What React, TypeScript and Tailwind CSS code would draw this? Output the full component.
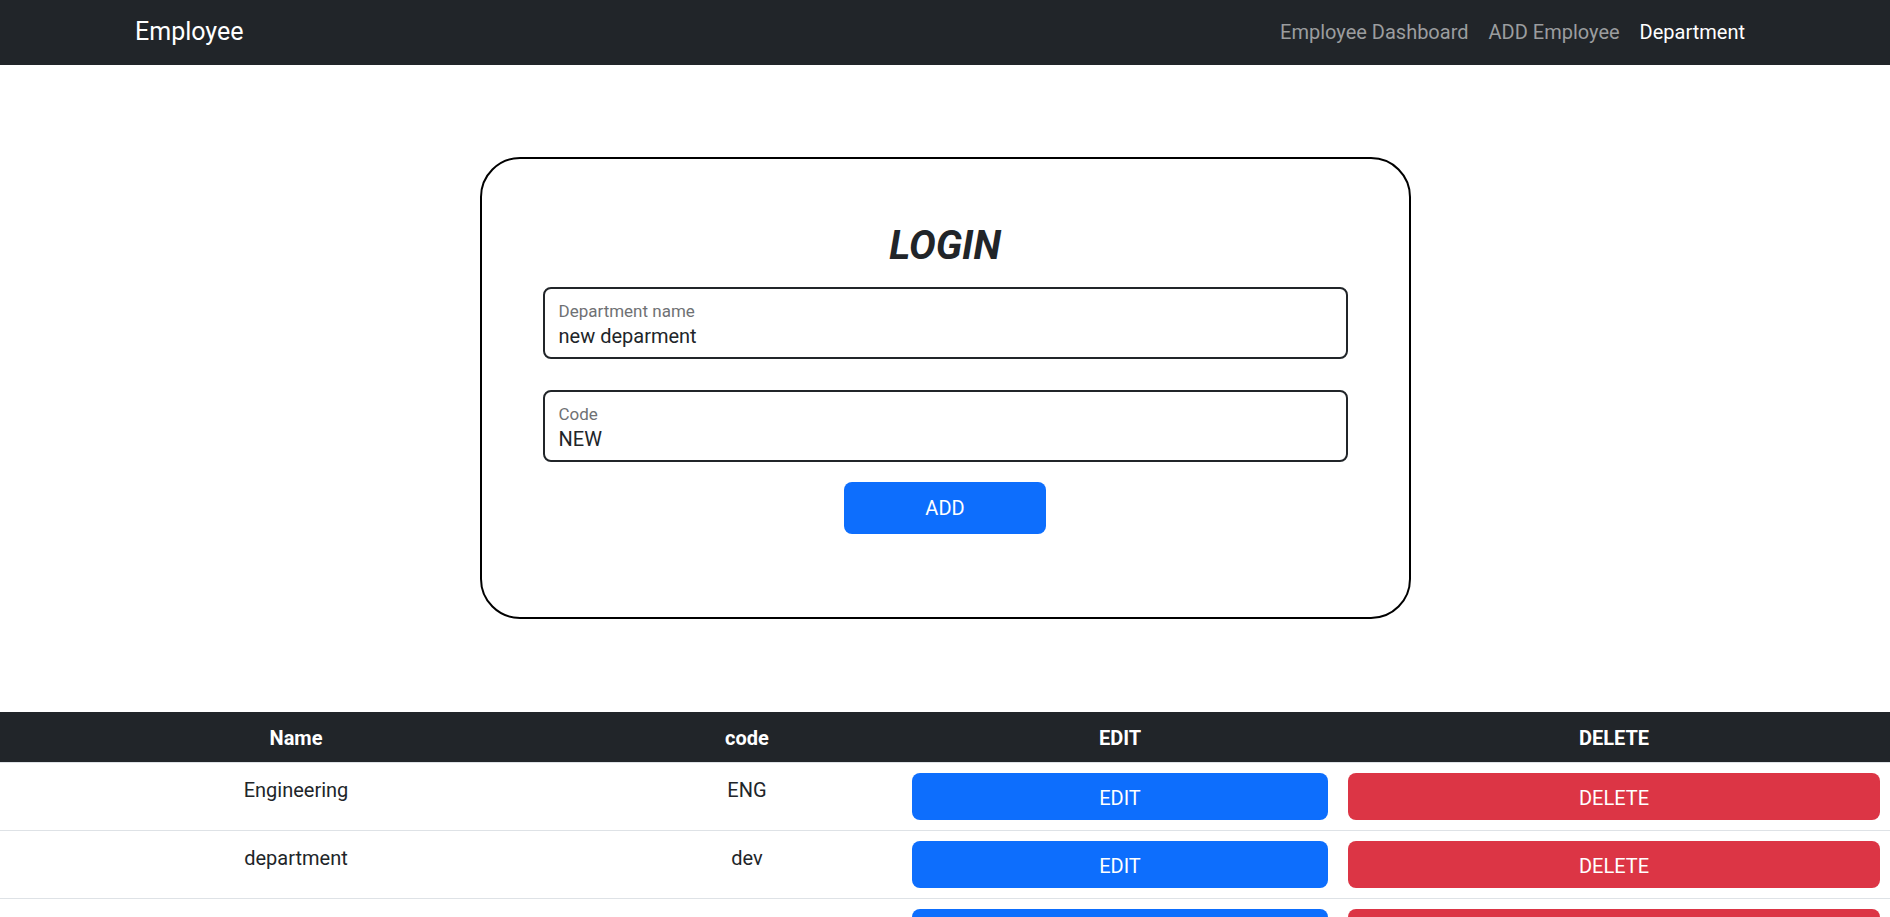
const departments = [
  { name: "Engineering", code: "ENG" },
  { name: "department", code: "dev" },
  { name: "Mobile Field", code: "prd" },
];

const navLinks = [
  { label: "Employee Dashboard", active: false },
  { label: "ADD Employee", active: false },
  { label: "Department", active: true },
];

function Navbar() {
  return (
    <nav className="h-[65px] bg-[#212529] flex items-center justify-between px-[135px] pb-[2px]">
      <span className="text-[25px] leading-[30px] text-white">Employee</span>
      <div className="flex">
        {navLinks.map((link, i) => (
          <a
            key={i}
            href="#"
            className={`px-[10px] text-[20px] leading-[30px] ${
              link.active ? "text-white" : "text-[#9b9d9f]"
            }`}
          >
            {link.label}
          </a>
        ))}
      </div>
    </nav>
  );
}

function FloatingField({ label, value }: { label: string; value: string }) {
  return (
    <div className="h-[72px] border-2 border-[#212529] rounded-[8px] flex flex-col px-[14px] pt-[12px]">
      <label className="text-[17px] leading-[20px] text-[#6f7174]">{label}</label>
      <input
        readOnly
        value={value}
        className="mt-[3px] text-[20px] leading-[24px] text-[#212529] outline-none bg-transparent"
      />
    </div>
  );
}

function DepartmentForm() {
  return (
    <div className="w-[931px] mx-auto mt-[92px] border-2 border-black rounded-[40px] px-[61px] pt-[63px] pb-[83px]">
      <h1 className="text-center text-[40px] leading-[48px] font-bold italic text-[#212529]">
        LOGIN
      </h1>
      <div className="mt-[17px] flex flex-col gap-[31px]">
        <FloatingField label="Department name" value="new deparment" />
        <FloatingField label="Code" value="NEW" />
      </div>
      <div className="flex justify-center mt-[20px]">
        <button
          type="button"
          className="w-[202px] h-[52px] rounded-[8px] bg-[#0d6efd] text-white text-[20px]"
        >
          ADD
        </button>
      </div>
    </div>
  );
}

function DepartmentTable() {
  return (
    <div className="mt-[93px] w-full">
      <div className="grid grid-cols-[592px_310px_436px_552px] bg-[#212529] text-white font-bold text-[20px] leading-[30px] h-[51px] border-b border-[#dee2e6]">
        <div className="text-center pt-[11px]">Name</div>
        <div className="text-center pt-[11px]">code</div>
        <div className="text-center pt-[11px]">EDIT</div>
        <div className="text-center pt-[11px]">DELETE</div>
      </div>
      {departments.map((d, i) => (
        <div
          key={i}
          className="grid grid-cols-[592px_310px_436px_552px] text-[20px] leading-[30px] text-[#212529] border-b border-[#dee2e6]"
        >
          <div className="text-center pt-[12px]">{d.name}</div>
          <div className="text-center pt-[12px]">{d.code}</div>
          <div className="p-[10px]">
            <button
              type="button"
              className="w-full h-[47px] rounded-[8px] bg-[#0d6efd] text-white pt-[2px]"
            >
              EDIT
            </button>
          </div>
          <div className="p-[10px]">
            <button
              type="button"
              className="w-full h-[47px] rounded-[8px] bg-[#dc3545] text-white pt-[2px]"
            >
              DELETE
            </button>
          </div>
        </div>
      ))}
    </div>
  );
}

export default function App() {
  return (
    <div className="h-[917px] overflow-hidden bg-white font-['Roboto',sans-serif]">
      <Navbar />
      <DepartmentForm />
      <DepartmentTable />
    </div>
  );
}
